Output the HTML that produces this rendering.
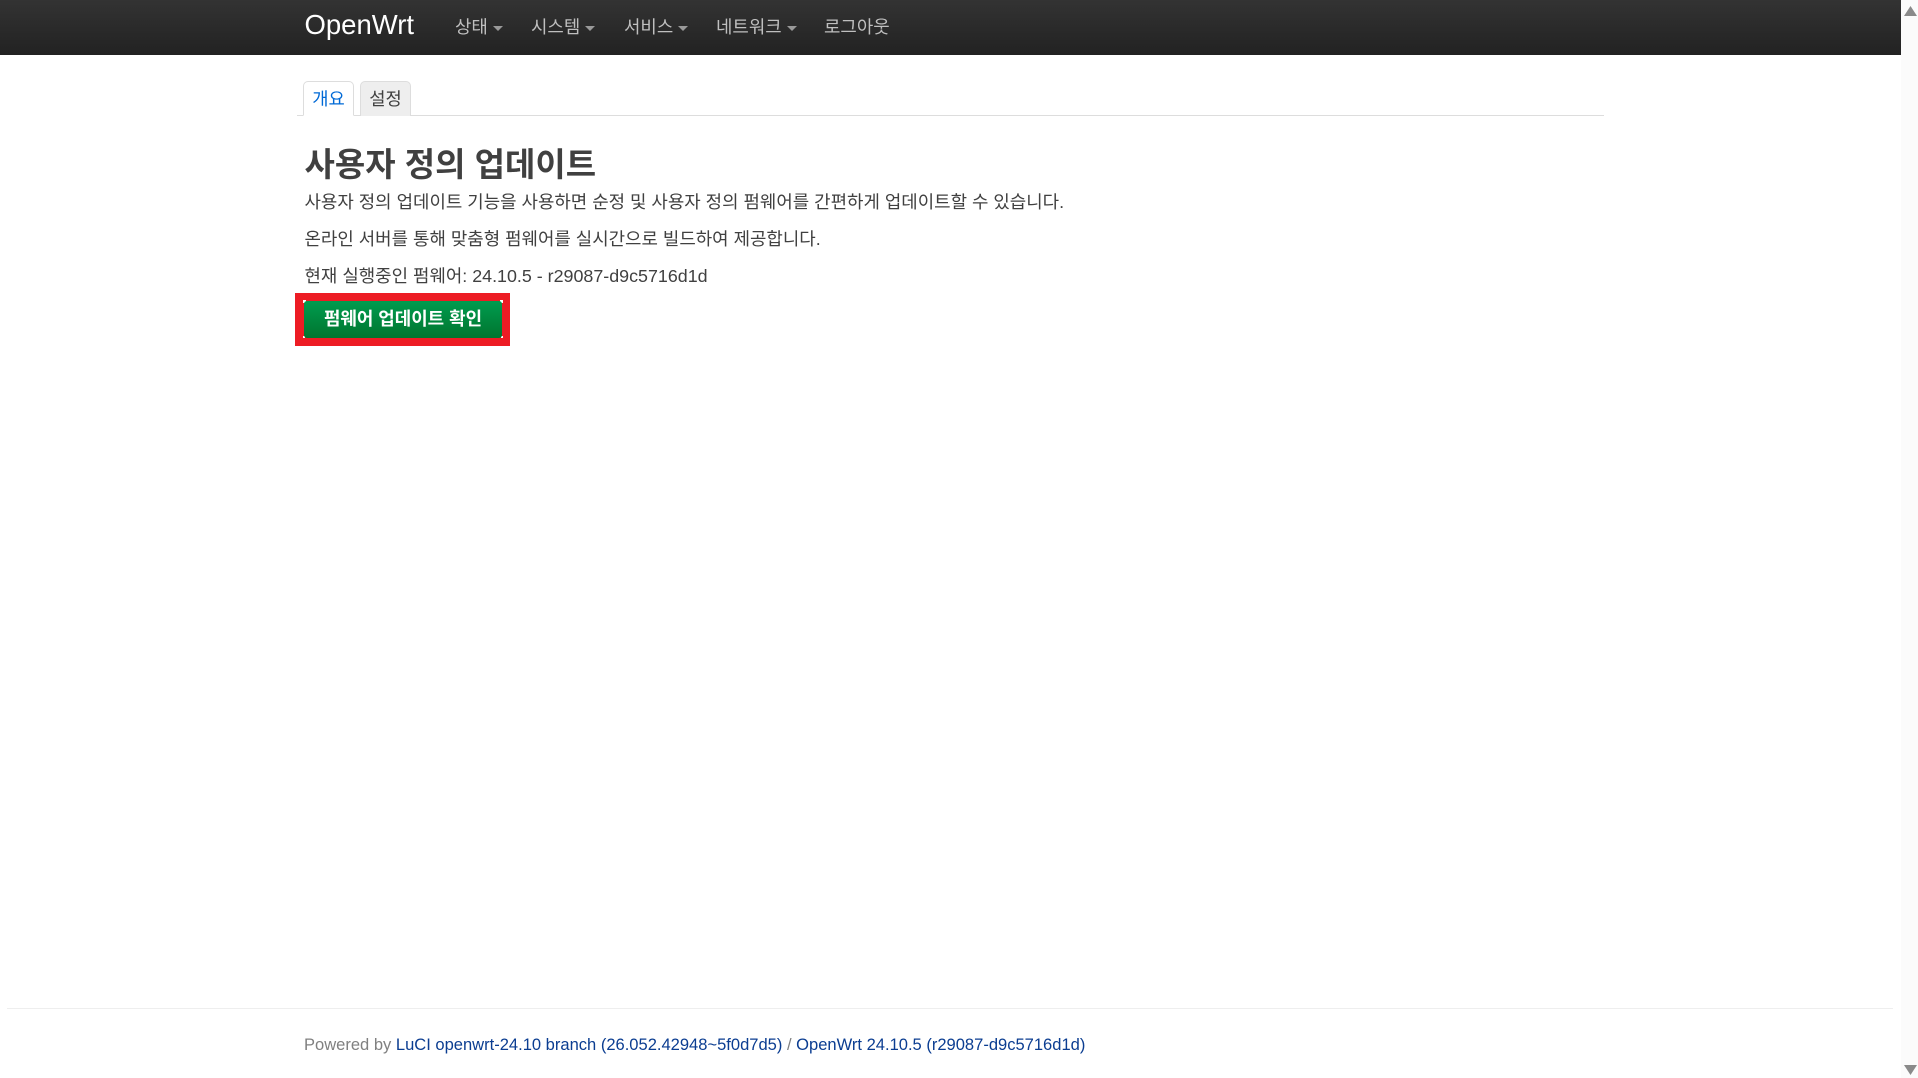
<!DOCTYPE html>
<html lang="ko">
<head>
<meta charset="utf-8">
<title>사용자 정의 업데이트</title>
<style>
html,body{margin:0;padding:0;width:1918px;height:1078px;overflow:hidden;background:#fff}
body{font-family:"Liberation Sans","Noto Sans CJK KR",sans-serif;position:relative;color:#333}
.a{position:absolute;white-space:nowrap}
#nav{left:0;top:0;width:1901px;height:55px;background:linear-gradient(#333,#222)}
.brand{left:304.5px;top:6px;font-size:27.5px;line-height:38px;color:#fff}
.m{top:11px;line-height:32px;font-size:17.85px;color:#bfbfbf}
.caret{display:inline-block;width:0;height:0;border-left:5px solid transparent;border-right:5px solid transparent;border-top:5px solid #999;margin-left:5px;vertical-align:middle}
.line{left:297px;top:115px;width:1307px;height:1px;background:#ddd}
.tab{box-sizing:border-box;top:81px;height:35px;border:1px solid #ddd;border-radius:5px 5px 0 0;line-height:34px;font-size:17.7px;text-align:center}
.t1{left:303px;width:51px;background:#fff;border-bottom:1px solid #fff;color:#0069d6}
.t2{left:360px;width:51px;background:#eee;border-bottom:none;color:#404040}
h2{margin:0;left:304.5px;top:142px;font-size:33px;line-height:46px;font-weight:bold;color:#404040}
.p{left:304.5px;font-size:17.88px;line-height:24px;color:#404040}
.red{left:295px;top:293px;width:215px;height:53px;background:#ed1c24}
.c{width:3px;height:3px;background:#fff}
.btn{box-sizing:border-box;left:304px;top:301px;width:198px;height:36.5px;border-radius:3px;background:linear-gradient(#009c4f,#00752f);color:#fff;font-weight:bold;font-size:17.9px;line-height:36px;text-align:center}
.hr{left:7px;top:1008px;width:1886px;height:1px;background:#eee}
.foot{left:304px;top:1033px;font-size:16.55px;line-height:24px;color:#808080}
.foot a{color:#0b3d91;text-decoration:none}
#sb{left:1901px;top:0;width:17px;height:1078px;background:#fbfbfb}
</style>
</head>
<body>
<div class="a" id="nav"></div>
<div class="a brand">OpenWrt</div>
<div class="a m" style="left:455px">상태<span class="caret"></span></div>
<div class="a m" style="left:531px">시스템<span class="caret"></span></div>
<div class="a m" style="left:624px">서비스<span class="caret"></span></div>
<div class="a m" style="left:716px">네트워크<span class="caret"></span></div>
<div class="a m" style="left:824px">로그아웃</div>
<div class="a line"></div>
<div class="a tab t1">개요</div>
<div class="a tab t2">설정</div>
<h2 class="a">사용자 정의 업데이트</h2>
<div class="a p" style="top:190px">사용자 정의 업데이트 기능을 사용하면 순정 및 사용자 정의 펌웨어를 간편하게 업데이트할 수 있습니다.</div>
<div class="a p" style="top:227px">온라인 서버를 통해 맞춤형 펌웨어를 실시간으로 빌드하여 제공합니다.</div>
<div class="a p" style="top:264px">현재 실행중인 펌웨어: 24.10.5 - r29087-d9c5716d1d</div>
<div class="a red"></div>
<div class="a c" style="left:303px;top:300px"></div>
<div class="a c" style="left:500px;top:300px"></div>
<div class="a c" style="left:303px;top:336px;width:2px;height:2px"></div>
<div class="a c" style="left:501px;top:336px;width:2px;height:2px"></div>
<div class="a btn">펌웨어 업데이트 확인</div>
<div class="a hr"></div>
<div class="a foot">Powered by <a href="#">LuCI openwrt-24.10 branch (26.052.42948~5f0d7d5)</a> / <a href="#">OpenWrt 24.10.5 (r29087-d9c5716d1d)</a></div>
<div class="a" id="sb">
<svg width="17" height="1078" style="display:block"><path d="M3 16 L9.5 6 L16 16 Z" fill="#8a8a8a"/><path d="M3 1065 L16 1065 L9.5 1075 Z" fill="#8a8a8a"/></svg>
</div>
</body>
</html>
